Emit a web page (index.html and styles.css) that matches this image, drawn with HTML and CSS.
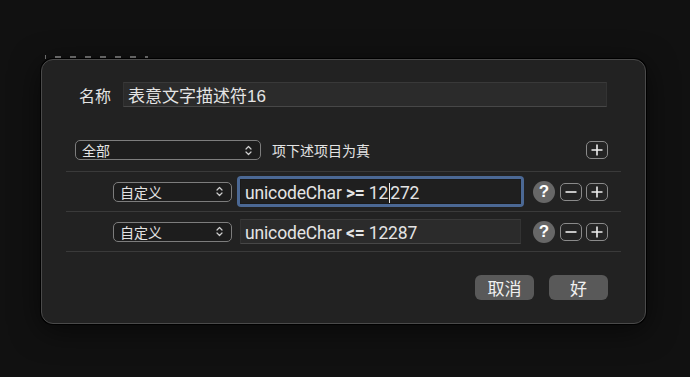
FILE: index.html
```html
<!DOCTYPE html>
<html lang="zh-CN">
<head>
    <meta charset="UTF-8">
    <meta name="viewport" content="width=device-width, initial-scale=1.0">
    <title>编辑智能规则</title>
    <link rel="stylesheet" href="styles.css">
</head>
<body>
    <!-- window edge peeking out behind the sheet -->
    <div class="behind"></div>

    <div class="sheet">
        <div class="name-row">
            <span class="label">名称</span>
            <div class="field name-field">表意文字描述符16</div>
        </div>

        <div class="match-row">
            <div class="popup popup-wide">
                <span>全部</span>
                <svg class="chevron" width="7" height="11" viewBox="0 0 7 11"><path d="M1 4 L3.5 1.5 L6 4 M1 7 L3.5 9.5 L6 7" fill="none" stroke="#cfcfcf" stroke-width="1.2" stroke-linecap="round" stroke-linejoin="round"/></svg>
            </div>
            <span class="match-text">项下述项目为真</span>
            <button class="square-btn add-btn">
                <svg width="14" height="14" viewBox="0 0 14 14"><path d="M7 1.5 V12.5 M1.5 7 H12.5" stroke="#eee" stroke-width="1.6"/></svg>
            </button>
        </div>

        <div class="rules">
            <div class="rule">
                <div class="popup popup-narrow">
                    <span>自定义</span>
                    <svg class="chevron" width="7" height="11" viewBox="0 0 7 11"><path d="M1 4 L3.5 1.5 L6 4 M1 7 L3.5 9.5 L6 7" fill="none" stroke="#cfcfcf" stroke-width="1.2" stroke-linecap="round" stroke-linejoin="round"/></svg>
                </div>
                <div class="focus-ring">
                    <div class="field rule-field focused">unicodeChar <b>&gt;=</b> 12<span class="caret"></span>272</div>
                </div>
                <button class="help-btn">?</button>
                <button class="square-btn">
                    <svg width="14" height="14" viewBox="0 0 14 14"><path d="M1.5 7 H12.5" stroke="#eee" stroke-width="1.6"/></svg>
                </button>
                <button class="square-btn">
                    <svg width="14" height="14" viewBox="0 0 14 14"><path d="M7 1.5 V12.5 M1.5 7 H12.5" stroke="#eee" stroke-width="1.6"/></svg>
                </button>
            </div>
            <div class="rule">
                <div class="popup popup-narrow">
                    <span>自定义</span>
                    <svg class="chevron" width="7" height="11" viewBox="0 0 7 11"><path d="M1 4 L3.5 1.5 L6 4 M1 7 L3.5 9.5 L6 7" fill="none" stroke="#cfcfcf" stroke-width="1.2" stroke-linecap="round" stroke-linejoin="round"/></svg>
                </div>
                <div class="plain-wrap">
                    <div class="field rule-field">unicodeChar <b>&lt;=</b> 12287</div>
                </div>
                <button class="help-btn">?</button>
                <button class="square-btn">
                    <svg width="14" height="14" viewBox="0 0 14 14"><path d="M1.5 7 H12.5" stroke="#eee" stroke-width="1.6"/></svg>
                </button>
                <button class="square-btn">
                    <svg width="14" height="14" viewBox="0 0 14 14"><path d="M7 1.5 V12.5 M1.5 7 H12.5" stroke="#eee" stroke-width="1.6"/></svg>
                </button>
            </div>
        </div>

        <div class="footer">
            <button class="push-btn">取消</button>
            <button class="push-btn">好</button>
        </div>
    </div>
</body>
</html>
```

FILE: styles.css
```css
* {
    box-sizing: border-box;
}
body {
    margin: 0;
    padding: 55px 0 0 41px;
    background-color: #111;
    color: #e4e4e4;
    font-family: "Liberation Sans", "Noto Sans CJK SC", sans-serif;
    height: 377px;
    overflow: hidden;
}
button {
    font-family: inherit;
    color: inherit;
    padding: 0;
    cursor: pointer;
}
.behind {
    width: 103px;
    height: 4px;
    margin-left: 4px;
    border-left: 1px solid #777;
    background: repeating-linear-gradient(to right, transparent 0, transparent 9px, #777 9px, #777 15px) 0 1px / 100% 2px no-repeat;
}
.sheet {
    width: 605px;
    height: 265px;
    padding: 22px 24px 23px 24px;
    background-color: #222;
    border: 1px solid #4a4a4a;
    border-radius: 12px;
    box-shadow: 0 0 0 1px #000, 0 6px 30px rgba(0, 0, 0, 0.6);
}
.name-row {
    display: flex;
    align-items: center;
    height: 25px;
    padding: 0 14px 0 13px;
}
.label {
    width: 44px;
    font-size: 16px;
}
.field {
    background-color: #2b2b2b;
    border: 1px solid #333;
    border-top-color: #393939;
    border-bottom-color: #474747;
    display: flex;
    align-items: center;
    padding-left: 4px;
    white-space: nowrap;
}
.name-field {
    flex: 1;
    height: 25px;
    font-size: 17px;
}
.match-row {
    display: flex;
    align-items: center;
    height: 20px;
    margin-top: 33px;
    padding: 0 13px 0 9px;
}
.popup {
    height: 20px;
    display: flex;
    align-items: center;
    justify-content: space-between;
    padding: 0 8px 0 6px;
    border: 1px solid #7d7d7d;
    border-radius: 5px;
    background-color: #1d1d1d;
    font-size: 14px;
}
.popup-wide {
    width: 186px;
}
.popup-narrow {
    width: 119px;
    margin-left: 38px;
}
.match-text {
    margin-left: 11px;
    font-size: 14px;
    flex: 1;
}
.square-btn {
    width: 22px;
    height: 18px;
    border: 1.5px solid #8a8a8a;
    border-radius: 5px;
    background-color: #242424;
    display: flex;
    align-items: center;
    justify-content: center;
}
.square-btn + .square-btn {
    margin-left: 4px;
}
.rules {
    margin-top: 11px;
    border-bottom: 1px solid #3a3a3a;
}
.rule {
    display: flex;
    align-items: center;
    height: 40px;
    border-top: 1px solid #3a3a3a;
    padding: 0 13px 0 9px;
}
.focus-ring {
    margin-left: 5px;
    padding: 3px;
    border-radius: 4px;
    background-color: #4b6894;
}
.plain-wrap {
    margin-left: 5px;
    padding: 3px;
}
.rule-field {
    width: 281px;
    height: 25px;
    padding-top: 2px;
    font-family: Roboto, "Liberation Sans", sans-serif;
    font-size: 17.5px;
    letter-spacing: -0.15px;
    white-space: pre;
}
.rule-field b {
    font-weight: bold;
}
.focused {
    background-color: #1f1f1f;
    border-color: #1a1a1a;
}
.caret {
    display: inline-block;
    width: 0;
    height: 20px;
    border-left: 1.5px solid #e8e8e8;
    margin: 0 0.5px;
}
.help-btn {
    width: 22px;
    height: 22px;
    margin-left: 9px;
    margin-right: 5px;
    border: none;
    border-radius: 50%;
    background-color: #676767;
    color: #fff;
    font-size: 17px;
    font-weight: bold;
}
.footer {
    display: flex;
    justify-content: flex-end;
    gap: 15px;
    margin-top: 23px;
    padding-right: 13px;
}
.push-btn {
    width: 59px;
    height: 25px;
    border: none;
    border-radius: 6px;
    background-color: #595959;
    font-size: 17px;
    color: #f0f0f0;
}
```
